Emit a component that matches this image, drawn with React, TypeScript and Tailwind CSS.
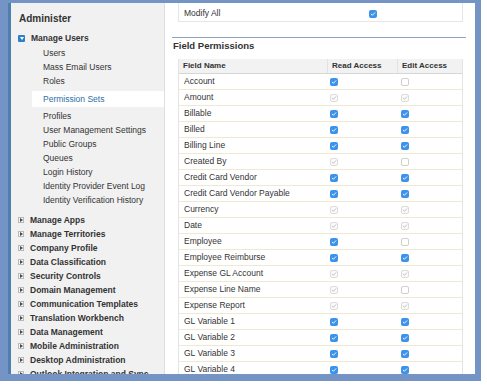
import React from "react";

type Box = "on" | "off" | "ro" | "none";

const rows: [string, Box, Box][] = [
  ["Account", "on", "off"],
  ["Amount", "ro", "ro"],
  ["Billable", "on", "on"],
  ["Billed", "on", "on"],
  ["Billing Line", "on", "on"],
  ["Created By", "ro", "off"],
  ["Credit Card Vendor", "on", "on"],
  ["Credit Card Vendor Payable", "on", "on"],
  ["Currency", "ro", "ro"],
  ["Date", "ro", "ro"],
  ["Employee", "on", "off"],
  ["Employee Reimburse", "on", "on"],
  ["Expense GL Account", "ro", "ro"],
  ["Expense Line Name", "ro", "off"],
  ["Expense Report", "ro", "ro"],
  ["GL Variable 1", "on", "on"],
  ["GL Variable 2", "on", "on"],
  ["GL Variable 3", "on", "on"],
  ["GL Variable 4", "on", "on"],
];

const userLinks = ["Users", "Mass Email Users", "Roles"];
const userLinks2 = [
  "Profiles",
  "User Management Settings",
  "Public Groups",
  "Queues",
  "Login History",
  "Identity Provider Event Log",
  "Identity Verification History",
];
const sections = [
  "Manage Apps",
  "Manage Territories",
  "Company Profile",
  "Data Classification",
  "Security Controls",
  "Domain Management",
  "Communication Templates",
  "Translation Workbench",
  "Data Management",
  "Mobile Administration",
  "Desktop Administration",
  "Outlook Integration and Sync",
];

function Check({ state }: { state: Box }) {
  if (state === "on") {
    return (
      <span className="flex h-[8px] w-[8px] items-center justify-center rounded-[2px] bg-[#3d92ea]">
        <svg viewBox="0 0 8 8" className="h-[6px] w-[6px]">
          <path d="M1.6 4.2 L3.2 5.7 L6.4 2.3" fill="none" stroke="white" strokeWidth="1.2" strokeLinecap="round" strokeLinejoin="round" />
        </svg>
      </span>
    );
  }
  if (state === "ro") {
    return (
      <span className="flex h-[8px] w-[8px] items-center justify-center rounded-[2px] border border-[#dcdcdc] bg-[#fafafa]">
        <svg viewBox="0 0 8 8" className="h-[6px] w-[6px]">
          <path d="M1.6 4.2 L3.2 5.7 L6.4 2.3" fill="none" stroke="#a8a8a8" strokeWidth="0.9" strokeLinecap="round" strokeLinejoin="round" />
        </svg>
      </span>
    );
  }
  return <span className="block h-[8px] w-[8px] rounded-[2px] border border-[#cfcfcf] bg-white" />;
}

function Collapsed() {
  return (
    <span className="mr-[6px] flex h-[6px] w-[6px] items-center justify-center border border-[#b8b8b8] bg-[#f8f8f8]">
      <span className="h-0 w-0 border-y-[2px] border-l-[3px] border-y-transparent border-l-[#444]" />
    </span>
  );
}

export default function App() {
  return (
    <div className="h-[385px] w-[487px] bg-white" style={{ fontFamily: '"Liberation Sans", Arial, sans-serif' }}>
      <div className="flex h-[381px] w-[481px] overflow-hidden border-b-[7px] border-l-[8px] border-r-[6px] border-t-[3px] border-[#7394c4]">
        <div className="w-[3px] shrink-0 bg-[#4f7fae]" />

        {/* Sidebar */}
        <aside className="flex w-[154px] shrink-0 flex-col overflow-hidden border-r border-[#dedede] bg-[#f1f1f1] text-[8.5px] text-[#333]">
          <div className="mt-[7px] flex h-[16px] shrink-0 items-center pl-[8px] text-[10px] font-bold">Administer</div>
          <div className="mt-[5px] flex h-[14px] shrink-0 items-center pl-[7px] font-bold">
            <span className="mr-[6px] flex h-[7px] w-[7px] items-center justify-center rounded-[1px] bg-[#2f7fc8]">
              <span className="h-0 w-0 border-x-[2px] border-t-[3px] border-x-transparent border-t-white" />
            </span>
            Manage Users
          </div>
          <div className="mt-[1px]" />
          {userLinks.map((l) => (
            <div key={l} className="flex h-[14px] shrink-0 items-center pl-[32px]">{l}</div>
          ))}
          <div className="ml-[21px] mt-[3px] flex h-[16px] shrink-0 items-center bg-white pl-[11px] text-[#2e6ea6]">Permission Sets</div>
          <div className="mt-[2px]" />
          {userLinks2.map((l) => (
            <div key={l} className="flex h-[14px] shrink-0 items-center pl-[32px]">{l}</div>
          ))}
          <div className="mt-[6px]" />
          {sections.map((s) => (
            <div key={s} className="flex h-[14px] shrink-0 items-center pl-[7px] font-bold">
              <Collapsed />
              {s}
            </div>
          ))}
        </aside>

        {/* Main */}
        <main className="flex min-w-0 flex-1 flex-col bg-white text-[8.5px] text-[#333]">
          <div className="ml-[13px] mr-[12px] flex h-[19px] shrink-0 items-center border-x border-b border-[#e6e6e6] pt-[3px]">
            <span className="w-[148px] pl-[5px]">Modify All</span>
            <span className="ml-[42px]"><Check state="on" /></span>
          </div>
          <div className="ml-[7px] mr-[9px] mt-[15px] h-px shrink-0 bg-[#8fa2c2]" />
          <div className="ml-[8px] mt-[2px] flex h-[12px] shrink-0 items-center text-[9.5px] font-bold">Field Permissions</div>
          <div className="ml-[13px] mr-[12px] mt-[7px] border-x border-[#e4e4e4]">
            <div className="flex h-[15px] items-center border-b border-[#d6d6d6] bg-[#f2f2f2] text-[8px] font-bold">
              <div className="w-[148px] pl-[4px]">Field Name</div>
              <div className="flex h-full w-[70px] items-center border-l border-[#e2e2e2] pl-[4px]">Read Access</div>
              <div className="flex h-full flex-1 items-center border-l border-[#e2e2e2] pl-[4px]">Edit Access</div>
            </div>
            {rows.map(([name, r, e]) => (
              <div key={name} className="flex h-[16px] items-center border-b border-[#efe9cf]">
                <div className="w-[148px] pl-[5px]">{name}</div>
                <div className="flex w-[70px] pl-[3px]"><Check state={r} /></div>
                <div className="flex flex-1 pl-[4px]"><Check state={e} /></div>
              </div>
            ))}
          </div>
        </main>
      </div>
    </div>
  );
}
